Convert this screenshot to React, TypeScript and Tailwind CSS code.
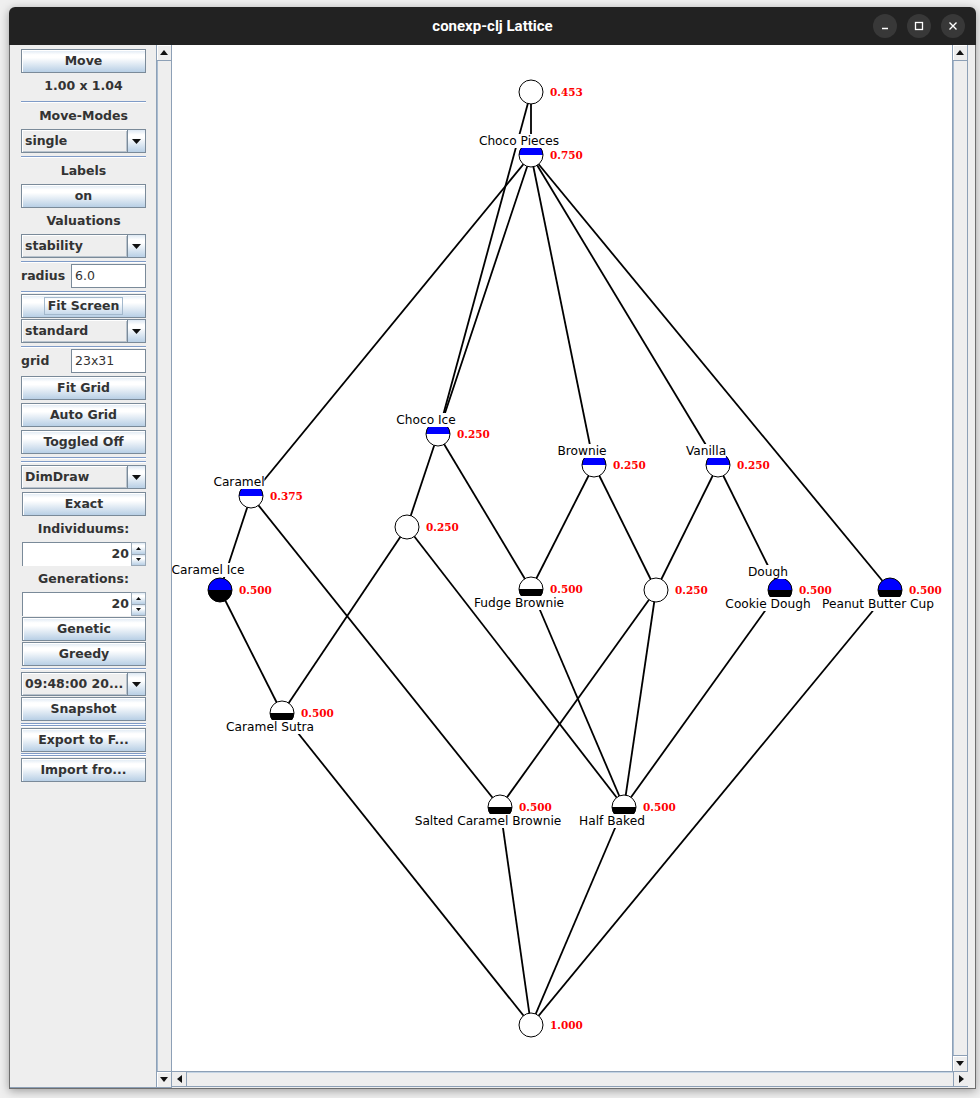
import React from "react";

const OX = 173;
const OY = 45;

type LatticeNode = {
  id: string;
  x: number;
  y: number;
  v: string;
  blue?: boolean;
  black?: boolean;
  above?: string;
  aboveDy?: number;
  below?: string;
};

const nodes: LatticeNode[] = [
  { id: "top", x: 532, y: 92, v: "0.453" },
  { id: "cp", x: 532, y: 155, v: "0.750", blue: true, above: "Choco Pieces" },
  { id: "caramel", x: 252, y: 496, v: "0.375", blue: true, above: "Caramel" },
  { id: "chocoice", x: 439, y: 434, v: "0.250", blue: true, above: "Choco Ice" },
  { id: "brownie", x: 595, y: 465, v: "0.250", blue: true, above: "Brownie" },
  { id: "vanilla", x: 719, y: 465, v: "0.250", blue: true, above: "Vanilla" },
  { id: "u1", x: 408, y: 527, v: "0.250" },
  { id: "caramelice", x: 221, y: 590, v: "0.500", blue: true, black: true, above: "Caramel Ice", aboveDy: 6 },
  { id: "fudge", x: 532, y: 589, v: "0.500", black: true, below: "Fudge Brownie" },
  { id: "u2", x: 657, y: 590, v: "0.250" },
  { id: "dough", x: 781, y: 590, v: "0.500", blue: true, black: true, above: "Dough", aboveDy: 4, below: "Cookie Dough" },
  { id: "pbc", x: 891, y: 590, v: "0.500", blue: true, black: true, below: "Peanut Butter Cup" },
  { id: "sutra", x: 283, y: 713, v: "0.500", black: true, below: "Caramel Sutra" },
  { id: "salted", x: 501, y: 807, v: "0.500", black: true, below: "Salted Caramel Brownie" },
  { id: "halfbaked", x: 625, y: 807, v: "0.500", black: true, below: "Half Baked" },
  { id: "bottom", x: 532, y: 1025, v: "1.000" },
];

const edges: [string, string][] = [
  ["top", "cp"],
  ["top", "chocoice"],
  ["cp", "caramel"],
  ["cp", "chocoice"],
  ["cp", "brownie"],
  ["cp", "vanilla"],
  ["cp", "pbc"],
  ["caramel", "caramelice"],
  ["caramel", "salted"],
  ["chocoice", "u1"],
  ["chocoice", "fudge"],
  ["brownie", "fudge"],
  ["brownie", "u2"],
  ["vanilla", "u2"],
  ["vanilla", "dough"],
  ["caramelice", "sutra"],
  ["u1", "sutra"],
  ["u1", "halfbaked"],
  ["fudge", "halfbaked"],
  ["u2", "salted"],
  ["u2", "halfbaked"],
  ["dough", "halfbaked"],
  ["sutra", "bottom"],
  ["salted", "bottom"],
  ["halfbaked", "bottom"],
  ["pbc", "bottom"],
];

const byId = Object.fromEntries(nodes.map((n) => [n.id, n]));

const grad =
  "bg-[linear-gradient(to_bottom,#dde8f3_0%,#ffffff_22%,#ffffff_35%,#b8cfe5_100%)]";
const btnCls = `h-[24px] flex items-center justify-center border border-[#7a8a99] ${grad} shadow-[inset_1px_1px_0_#ffffff] text-[#333333] font-bold text-[12.5px]`;
const labelCls = "h-[16px] flex items-center justify-center text-[#333333] font-bold text-[12.5px] leading-[16px]";

function Btn({ children, className = "" }: { children: React.ReactNode; className?: string }) {
  return <div className={`${btnCls} ${className}`}>{children}</div>;
}

function DownTri({ w = 9, h = 5 }: { w?: number; h?: number }) {
  return (
    <svg width={w} height={h} viewBox={`0 0 ${w} ${h}`}>
      <path d={`M0 0H${w}L${w / 2} ${h}Z`} fill="#111" />
    </svg>
  );
}

function UpTri({ w = 9, h = 5 }: { w?: number; h?: number }) {
  return (
    <svg width={w} height={h} viewBox={`0 0 ${w} ${h}`}>
      <path d={`M0 ${h}H${w}L${w / 2} 0Z`} fill="#111" />
    </svg>
  );
}

function Combo({ label, className = "" }: { label: string; className?: string }) {
  return (
    <div className={`h-[24px] flex border border-[#7a8a99] ${className}`}>
      <div className="flex-1 flex items-center pl-[3px] bg-[#eeeeee] shadow-[inset_1px_1px_0_#ffffff,inset_-1px_-1px_0_#b9c3cd] text-[#333333] font-bold text-[12.5px] whitespace-nowrap overflow-hidden">
        {label}
      </div>
      <div className={`w-[18px] border-l border-[#7a8a99] flex items-center justify-center ${grad}`}>
        <DownTri />
      </div>
    </div>
  );
}

function Sep({ className = "" }: { className?: string }) {
  return <div className={`h-[2px] border-t border-[#7f9bc7] border-b border-b-white ${className}`} />;
}

function DoubleSep({ className = "" }: { className?: string }) {
  return (
    <div className={`h-[4px] flex flex-col ${className}`}>
      <div className="h-px bg-[#7f9bc7]" />
      <div className="h-px bg-white" />
      <div className="h-px bg-[#7f9bc7]" />
      <div className="h-px bg-white" />
    </div>
  );
}

function FieldRow({ label, value }: { label: string; value: string }) {
  return (
    <div className="h-[24px] flex items-center">
      <div className="w-[50px] text-[#333333] font-bold text-[12.5px]">{label}</div>
      <div className="flex-1 h-full bg-white border border-[#7a8a99] flex items-center pl-[3px] text-[#333333] text-[12.5px]">
        {value}
      </div>
    </div>
  );
}

function Spinner({ value }: { value: string }) {
  return (
    <div className="h-[24px] flex ml-px">
      <div className="flex-1 bg-white border-l border-t border-[#7a8a99] flex items-center justify-end pr-[2px] text-[#333333] font-bold text-[12.5px]">
        {value}
      </div>
      <div className="w-[15px] flex flex-col border border-[#9aa8b6]">
        <div className={`flex-1 flex items-center justify-center border-b border-[#9aa8b6] ${grad}`}>
          <UpTri w={5} h={3} />
        </div>
        <div className={`flex-1 flex items-center justify-center ${grad}`}>
          <DownTri w={5} h={3} />
        </div>
      </div>
    </div>
  );
}

function VScroll({ className = "" }: { className?: string }) {
  return (
    <div className={`w-[16px] flex flex-col bg-[#eeeeee] border-x border-[#8da0b6] ${className}`}>
      <div className="h-[16px] flex items-center justify-center border-b border-[#8da0b6] shadow-[inset_1px_1px_0_#ffffff]">
        <UpTri w={8} h={5} />
      </div>
      <div className="flex-1 border-l border-[#a8bbd0]" />
      <div className="h-[16px] flex items-center justify-center border-t border-[#8da0b6] shadow-[inset_1px_1px_0_#ffffff]">
        <DownTri w={8} h={5} />
      </div>
    </div>
  );
}

function HScroll() {
  return (
    <div className="h-[16px] flex bg-[#eeeeee] border-y border-[#8da0b6]">
      <div className="w-[15px] flex items-center justify-center border-r border-[#8da0b6]">
        <svg width="5" height="8" viewBox="0 0 5 8">
          <path d="M5 0V8L0 4Z" fill="#111" />
        </svg>
      </div>
      <div className="flex-1 border-t border-[#c4d4e4]" />
      <div className="w-[15px] flex items-center justify-center border-l border-[#8da0b6]">
        <svg width="5" height="8" viewBox="0 0 5 8">
          <path d="M0 0V8L5 4Z" fill="#111" />
        </svg>
      </div>
    </div>
  );
}

function Sidebar() {
  return (
    <div className="w-[146px] h-full pl-[11px] pr-[10px] flex flex-col font-['DejaVu_Sans',sans-serif]">
      <Btn className="mt-[4px]">Move</Btn>
      <div className={`${labelCls} mt-[5px]`}>1.00 x 1.04</div>
      <Sep className="mt-[7px]" />
      <div className={`${labelCls} mt-[5px]`}>Move-Modes</div>
      <Combo label="single" className="mt-[5px]" />
      <Sep className="mt-[3px]" />
      <div className={`${labelCls} mt-[5px]`}>Labels</div>
      <Btn className="mt-[5px]">on</Btn>
      <div className={`${labelCls} mt-[5px]`}>Valuations</div>
      <Combo label="stability" className="mt-[5px]" />
      <Sep className="mt-[3px]" />
      <div className="mt-[1px]">
        <FieldRow label="radius" value="6.0" />
      </div>
      <Sep className="mt-[3px]" />
      <Btn className="mt-[1px]">
        <span className="border border-[#a3b8cc] px-[3px] leading-[16px]">Fit Screen</span>
      </Btn>
      <Combo label="standard" className="mt-[1px]" />
      <Sep className="mt-[3px]" />
      <div className="mt-[1px]">
        <FieldRow label="grid" value="23x31" />
      </div>
      <Btn className="mt-[3px]">Fit Grid</Btn>
      <Btn className="mt-[3px]">Auto Grid</Btn>
      <Btn className="mt-[3px]">Toggled Off</Btn>
      <Sep className="mt-[3px]" />
      <Sep className="mt-[2px]" />
      <Combo label="DimDraw" className="mt-[2px]" />
      <Btn className="mt-[3px] ml-px">Exact</Btn>
      <div className={`${labelCls} mt-[5px]`}>Individuums:</div>
      <div className="mt-[5px]">
        <Spinner value="20" />
      </div>
      <div className={`${labelCls} mt-[5px]`}>Generations:</div>
      <div className="mt-[5px]">
        <Spinner value="20" />
      </div>
      <Btn className="mt-[1px] ml-px">Genetic</Btn>
      <Btn className="mt-[1px] ml-px">Greedy</Btn>
      <Sep className="mt-[2px]" />
      <Combo label="09:48:00 20..." className="mt-[2px]" />
      <Btn className="mt-[1px]">Snapshot</Btn>
      <DoubleSep className="mt-[2px]" />
      <Btn className="mt-[1px]">Export to F...</Btn>
      <DoubleSep className="mt-[1px]" />
      <Btn className="mt-[1px]">Import fro...</Btn>
    </div>
  );
}

function Lattice() {
  return (
    <div className="relative w-[780px] h-[1026px] bg-white overflow-hidden">
      <svg className="absolute inset-0" width="780" height="1026" viewBox="0 0 780 1026">
        {edges.map(([a, b]) => {
          const p = byId[a];
          const q = byId[b];
          return (
            <line
              key={a + b}
              x1={p.x - OX}
              y1={p.y - OY}
              x2={q.x - OX}
              y2={q.y - OY}
              stroke="#000"
              strokeWidth="1.8"
            />
          );
        })}
        {nodes.map((n) => {
          const x = n.x - OX;
          const y = n.y - OY;
          return (
            <g key={n.id}>
              <circle cx={x} cy={y} r="12" fill="#fff" />
              {n.blue && <path d={`M${x - 12},${y} A12,12 0 0 1 ${x + 12},${y} Z`} fill="#0000ff" />}
              {n.black && <path d={`M${x - 12},${y} A12,12 0 0 0 ${x + 12},${y} Z`} fill="#000" />}
              <circle cx={x} cy={y} r="12" fill="none" stroke="#000" strokeWidth="1" />
              <text
                x={x + 19}
                y={y + 4}
                fill="#ff0000"
                fontFamily="'DejaVu Serif', serif"
                fontWeight="bold"
                fontSize="10.5"
              >
                {n.v}
              </text>
            </g>
          );
        })}
      </svg>
      {nodes.map((n) => (
        <React.Fragment key={n.id + "-l"}>
          {n.above && (
            <div
              className="absolute -translate-x-1/2 bg-white text-black text-[12.2px] leading-[14px] whitespace-nowrap font-['DejaVu_Sans',sans-serif]"
              style={{ left: n.x - OX - 12, top: n.y - OY - 21 - (n.aboveDy ?? 0) }}
            >
              {n.above}
            </div>
          )}
          {n.below && (
            <div
              className="absolute -translate-x-1/2 bg-white text-black text-[12.2px] leading-[14px] whitespace-nowrap font-['DejaVu_Sans',sans-serif]"
              style={{ left: n.x - OX - 12, top: n.y - OY + 7 }}
            >
              {n.below}
            </div>
          )}
        </React.Fragment>
      ))}
    </div>
  );
}

function TitleBar() {
  return (
    <div className="h-[38px] rounded-t-[6px] bg-[#222222] relative flex items-center justify-center">
      <span className="text-white font-bold text-[15px] font-['Roboto',sans-serif]">conexp-clj Lattice</span>
      <div className="absolute right-[11px] top-[7px] flex gap-[10px]">
        <div className="w-[24px] h-[24px] rounded-full bg-[#383838] flex items-center justify-center">
          <svg width="10" height="10" viewBox="0 0 10 10">
            <path d="M2 7.5H8" stroke="#fff" strokeWidth="1.5" />
          </svg>
        </div>
        <div className="w-[24px] h-[24px] rounded-full bg-[#383838] flex items-center justify-center">
          <svg width="10" height="10" viewBox="0 0 10 10">
            <rect x="1.5" y="1.5" width="7" height="7" fill="none" stroke="#fff" strokeWidth="1.3" />
          </svg>
        </div>
        <div className="w-[24px] h-[24px] rounded-full bg-[#383838] flex items-center justify-center">
          <svg width="10" height="10" viewBox="0 0 10 10">
            <path d="M1.5 1.5L8.5 8.5M8.5 1.5L1.5 8.5" stroke="#fff" strokeWidth="1.4" />
          </svg>
        </div>
      </div>
    </div>
  );
}

export default function App() {
  return (
    <div className="w-[980px] h-[1098px] bg-[#efefef] pt-[7px] pl-[9px] overflow-hidden">
      <div className="w-[967px] h-[1082px] flex flex-col rounded-t-[6px] shadow-[0_2px_10px_rgba(0,0,0,0.35)]">
        <TitleBar />
        <div className="h-[1044px] flex bg-[#eeeeee] border-x border-b border-[#6e6e6e]">
          <div className="flex border-b border-[#8da0b6]">
            <Sidebar />
            <VScroll />
          </div>
          <div className="flex flex-col">
            <div className="flex">
              <Lattice />
              <VScroll className="h-[1026px]" />
            </div>
            <HScroll />
          </div>
        </div>
      </div>
    </div>
  );
}
